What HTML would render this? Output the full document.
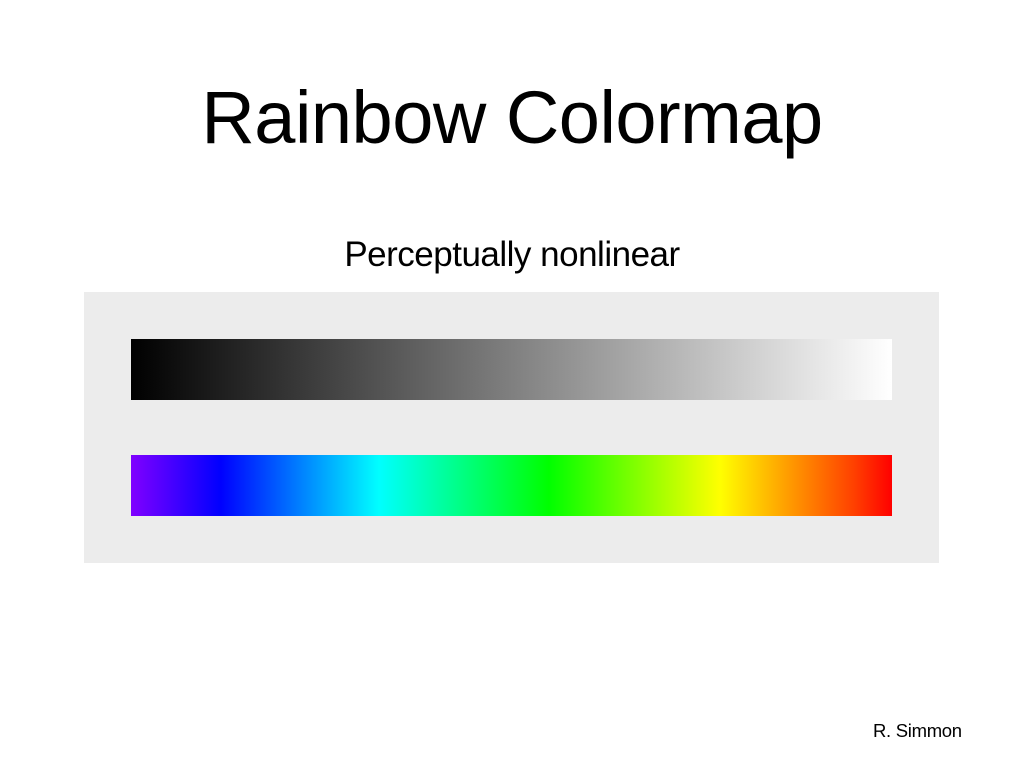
<!DOCTYPE html>
<html><head><meta charset="utf-8"><style>
html,body{margin:0;padding:0;width:1024px;height:768px;background:#fff;overflow:hidden;font-family:"Liberation Sans",sans-serif;color:#000}
.t{position:absolute;left:0;width:1024px;text-align:center;top:76px;font-size:74px;line-height:84px;letter-spacing:-0.5px}
.s{position:absolute;left:0;width:1024px;text-align:center;top:234px;font-size:35px;line-height:42px;letter-spacing:-0.5px}
.box{position:absolute;left:84px;top:292px;width:855px;height:271px;background:#ececec}
.g{position:absolute;left:131px;top:339px;width:761px;height:61px;background:linear-gradient(to right,#000,#fff)}
.r{position:absolute;left:131px;top:455px;width:761px;height:61px;background:linear-gradient(to right,#8000ff 0%,#0000ff 11.8%,#00ffff 32.6%,#00ff00 54.9%,#ffff00 77.4%,#ffa000 86%,#ff4000 95%,#ff0000 100%)}
.f{position:absolute;left:873px;top:720px;font-size:18.5px;line-height:22px;letter-spacing:-0.3px}
</style></head><body>
<div class="t">Rainbow Colormap</div>
<div class="s">Perceptually nonlinear</div>
<div class="box"></div>
<div class="g"></div>
<div class="r"></div>
<div class="f">R. Simmon</div>
</body></html>
